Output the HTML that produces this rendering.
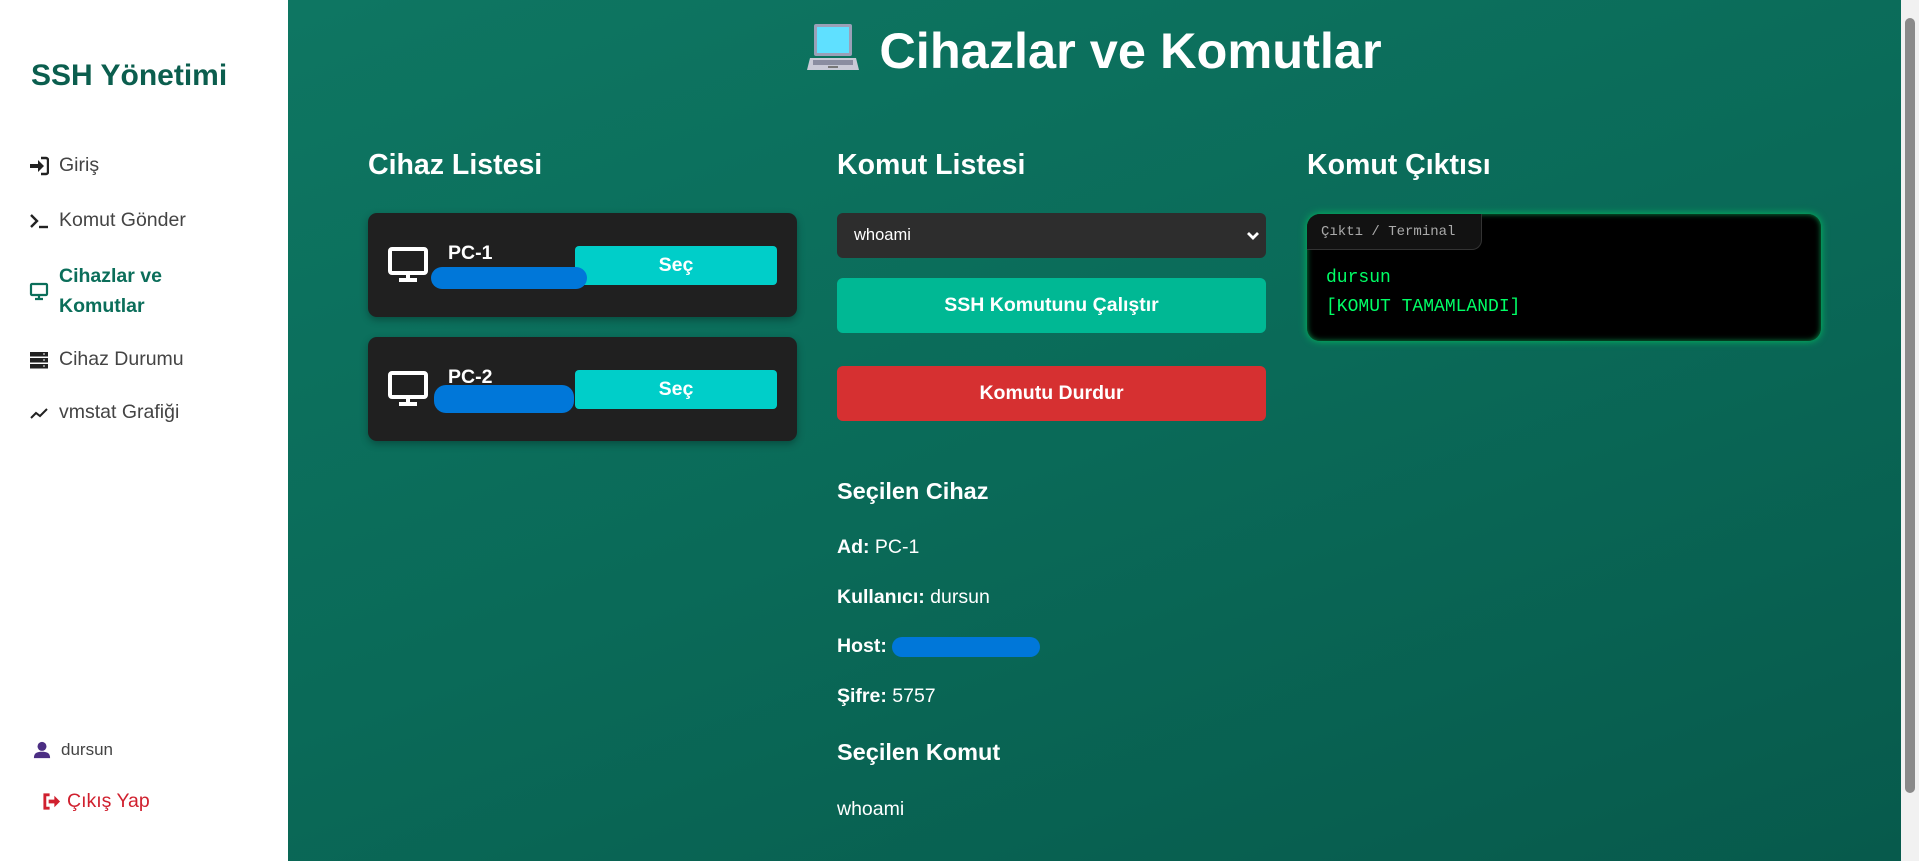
<!DOCTYPE html>
<html><head><meta charset="utf-8"><style>
*{box-sizing:border-box;margin:0;padding:0}
body{width:1919px;height:861px;overflow:hidden;font-family:"Liberation Sans",Arial,sans-serif;position:relative;background:#fff}
.side{position:absolute;left:0;top:0;width:288px;height:861px;background:#fff}
.brand{position:absolute;left:31px;top:59px;font-size:30px;font-weight:bold;color:#0b5e4e}
.nav{position:absolute;left:29px;font-size:19.5px;color:#444;display:flex;align-items:center}
.nav svg{width:20px;height:20px;margin-right:10px}
.main{position:absolute;left:288px;top:0;width:1613px;height:861px;background:linear-gradient(160deg,#0e7662 0%,#0a6a58 50%,#075a4c 100%)}
.sb{position:absolute;left:1901px;top:0;width:18px;height:861px;background:#f1f1f1}
.sb div{position:absolute;left:4px;top:18px;width:10px;height:775px;background:#8a8a8a;border-radius:5px}
h1{position:absolute;left:0;width:1613px;top:21px;text-align:center;color:#fff;font-size:50.5px;font-weight:bold}
h2{position:absolute;color:#fff;font-size:28.5px;font-weight:bold}
.card{position:absolute;left:368px;width:429px;height:104px;background:#202020;border-radius:9px;box-shadow:0 3px 8px rgba(0,0,0,.3)}
.card .mon{position:absolute;left:20px;top:34px}
.card .nm{position:absolute;left:80px;top:29px;color:#fff;font-weight:bold;font-size:19.5px}
.card .sel{position:absolute;left:207px;top:33px;width:202px;height:39px;background:#00cec9;border-radius:4px;color:#fff;font-weight:bold;font-size:19.5px;text-align:center;line-height:39px}
.blob{position:absolute;background:#0077d9;border-radius:12px}
.btn{position:absolute;left:837px;width:429px;border-radius:6px;color:#fff;font-weight:bold;font-size:19.5px;text-align:center}
.t{position:absolute;left:837px;color:#fff;font-size:19.5px}
.t b{font-weight:bold}
</style></head><body>
<div class="side">
<div class="brand">SSH Yönetimi</div>
<div class="nav" style="top:154px"><svg viewBox="0 0 20 20"><path d="M1 8h8V4l6 6-6 6v-4H1z" fill="#222"/><path d="M12 2h5a2 2 0 0 1 2 2v12a2 2 0 0 1-2 2h-5" stroke="#222" stroke-width="2.4" fill="none"/></svg>Giriş</div>
<div class="nav" style="top:209px"><svg viewBox="0 0 20 20"><path d="M2 4l6 6-6 6" stroke="#222" stroke-width="2.4" fill="none"/><path d="M10 16h9" stroke="#222" stroke-width="2.4"/></svg>Komut Gönder</div>
<div class="nav" style="top:261px;color:#0b6e5a;font-weight:bold;line-height:30px"><svg viewBox="0 0 20 20" style="align-self:center"><rect x="2" y="3" width="16" height="11" rx="1" stroke="#0b6e5a" stroke-width="2.2" fill="none"/><path d="M10 14v3M6 18h8" stroke="#0b6e5a" stroke-width="2.2"/></svg><span>Cihazlar ve<br>Komutlar</span></div>
<div class="nav" style="top:348px"><svg viewBox="0 0 20 20"><rect x="1" y="2" width="18" height="4.5" fill="#222"/><rect x="1" y="8" width="18" height="4.5" fill="#222"/><rect x="1" y="14" width="18" height="4.5" fill="#222"/><path d="M14 4h2M14 10h2M14 16h2" stroke="#fff"/></svg>Cihaz Durumu</div>
<div class="nav" style="top:401px"><svg viewBox="0 0 20 20"><path d="M2 15l5-5 4 3 7-7" stroke="#222" stroke-width="2" fill="none"/></svg>vmstat Grafiği</div>
<div class="nav" style="top:740px;left:33px;font-size:17px"><svg viewBox="0 0 20 20" style="width:18px;height:18px;margin-right:10px"><circle cx="10" cy="6" r="5" fill="#4b2e83"/><path d="M1 19c0-6 4-7 9-7s9 1 9 7z" fill="#4b2e83"/></svg>dursun</div>
<div class="nav" style="top:790px;left:42px;color:#d0202e;font-size:19.5px"><svg viewBox="0 0 20 20" style="width:19px;height:19px;margin-right:6px"><path d="M8 3H3v14h5" stroke="#d0202e" stroke-width="3" fill="none"/><path d="M7 8h6V4l6 6-6 6v-4H7z" fill="#d0202e"/></svg>Çıkış Yap</div>
</div>
<div class="main">
<h1><svg width="52" height="50" viewBox="0 0 52 50" style="vertical-align:-4px;margin-right:20px"><rect x="7" y="2" width="38" height="32" rx="2" fill="#9aa0b8"/><rect x="10" y="5" width="32" height="26" fill="#5fe0ff"/><path d="M3 36h46l3 12H0z" fill="#c9cad6"/><rect x="6" y="38" width="40" height="5" fill="#8a8da0"/><rect x="21" y="44" width="10" height="2" fill="#777"/></svg>Cihazlar ve Komutlar</h1>
</div>
<div class="sb"><div></div></div>
<h2 style="left:368px;top:149px">Cihaz Listesi</h2>
<h2 style="left:837px;top:149px">Komut Listesi</h2>
<h2 style="left:1307px;top:149px">Komut Çıktısı</h2>
<div class="card" style="top:213px"><svg class="mon" width="40" height="36" viewBox="0 0 40 36"><rect x="2" y="2" width="36" height="24" rx="2" stroke="#fff" stroke-width="4" fill="none"/><path d="M20 26v5M11 33h18" stroke="#fff" stroke-width="4"/></svg><div class="nm">PC-1</div><div class="sel">Seç</div><div class="blob" style="left:63px;top:54px;width:156px;height:22px"></div></div>
<div class="card" style="top:337px"><svg class="mon" width="40" height="36" viewBox="0 0 40 36"><rect x="2" y="2" width="36" height="24" rx="2" stroke="#fff" stroke-width="4" fill="none"/><path d="M20 26v5M11 33h18" stroke="#fff" stroke-width="4"/></svg><div class="nm">PC-2</div><div class="sel">Seç</div><div class="blob" style="left:66px;top:48px;width:140px;height:28px"></div></div>
<div style="position:absolute;left:837px;top:213px;width:429px;height:45px;background:#2d2d2d;border-radius:6px;color:#fff;font-size:16.5px;line-height:45px;padding-left:17px">whoami<svg width="14" height="10" viewBox="0 0 14 10" style="position:absolute;right:6px;top:18px"><path d="M2 2l5 5 5-5" stroke="#fff" stroke-width="2.8" fill="none"/></svg></div>
<div class="btn" style="top:278px;height:55px;line-height:55px;background:#00b894">SSH Komutunu Çalıştır</div>
<div class="btn" style="top:366px;height:55px;line-height:55px;background:#d63031">Komutu Durdur</div>
<div class="t" style="top:478px;font-size:23.5px;font-weight:bold">Seçilen Cihaz</div>
<div class="t" style="top:536px"><b>Ad:</b> PC-1</div>
<div class="t" style="top:586px"><b>Kullanıcı:</b> dursun</div>
<div class="t" style="top:635px"><b>Host:</b></div>
<div class="blob" style="left:892px;top:637px;width:148px;height:20px"></div>
<div class="t" style="top:685px"><b>Şifre:</b> 5757</div>
<div class="t" style="top:739px;font-size:23.5px;font-weight:bold">Seçilen Komut</div>
<div class="t" style="top:798px">whoami</div>
<div style="position:absolute;left:1307px;top:214px;width:514px;height:127px;background:#000;border-radius:13px;box-shadow:0 0 8px #00c060,inset 0 0 6px #0a8a48">
<div style="position:absolute;left:0;top:0;width:175px;height:36px;background:#121212;border-radius:13px 0 10px 0;border:1px solid #333;border-top:none;border-left:none;color:#aaa;font-family:'Liberation Mono',monospace;font-size:14px;line-height:36px;padding-left:14px">Çıktı / Terminal</div>
<div style="position:absolute;left:19px;top:50px;color:#00ff66;font-family:'Liberation Mono',monospace;font-size:18px;line-height:29px">dursun<br>[KOMUT TAMAMLANDI]</div>
</div>
</body></html>
